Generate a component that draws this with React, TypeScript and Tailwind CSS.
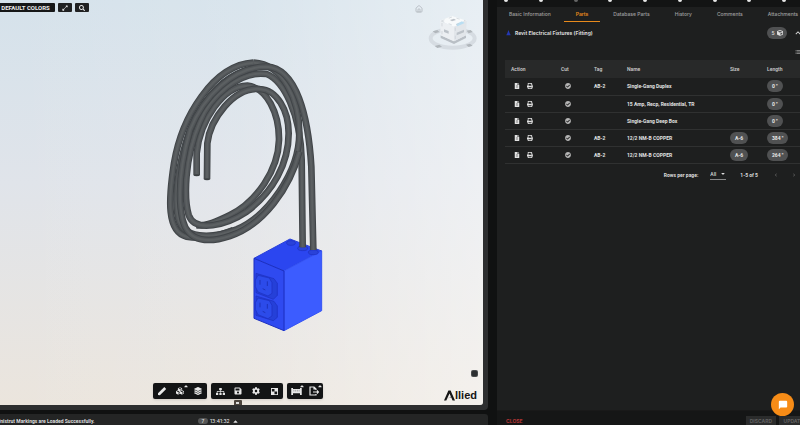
import React from 'react'
import {
  FaCubes, FaLayerGroup, FaSitemap, FaSave, FaCog, FaSearch,
  FaExpandAlt, FaCaretUp, FaFileAlt, FaPrint, FaCheckCircle, FaCube,
} from 'react-icons/fa'
import { MdChatBubble, MdFormatListBulleted, MdChevronLeft, MdChevronRight, MdExpandLess } from 'react-icons/md'
import { Home } from 'lucide-react'

const cables = [
  'M310 38 C190 45 95 200 72 340 C55 450 50 545 110 560 C150 568 200 560 250 540',
  'M140 376 L140 310 C150 210 220 108 292 107 C350 112 388 190 387 270 C385 360 320 455 240 495 C200 515 165 530 140 526',
  'M458 592 L455 330 C452 190 400 92 350 72 C270 60 180 140 150 215 C100 330 103 450 116 495 C135 550 230 525 290 485 C370 425 416 340 416 250 C416 180 380 120 330 117 C250 110 180 210 172 280 L171 388',
  'M310 38 C400 42 448 150 448 250 C448 370 350 500 260 538 C190 565 90 575 82 490 C70 400 105 250 150 180 C200 100 250 70 300 58',
  'M490 600 L484 350 C475 200 440 55 350 50 C250 50 160 140 120 240 C95 330 80 430 98 510 C115 580 180 578 240 558 C340 525 420 415 448 305',
]

function Scene() {
  return (
    <svg viewBox="0 0 483 405" preserveAspectRatio="none" className="absolute inset-0 h-full w-full" aria-label="Model view">
      <g transform="translate(230 220) scale(.33333)" stroke="#1c2fc0" strokeWidth="3" strokeLinejoin="round">
        <path d="M72 115 180 57 275 93 162 153Z" fill="#2b46f0" stroke="#2840d8" />
        <path d="M162 153 275 93V272L162 332Z" fill="#3c5cff" stroke="#3553f4" />
        <path d="M72 115 162 153V332L72 295Z" fill="#2f4af0" />
        <g fill="#2540d8" strokeWidth="2">
          <path d="M78 160 132 176 142 190V226L130 238 78 218Z" />
          <path d="M78 228 132 244 142 258V292L130 302 78 286Z" />
          <path d="M84 166 118 174 126 188V220L114 228 84 216 76 200V180Z" fill="#2c4bea" />
          <path d="M84 234 118 242 126 256V288L114 296 84 284 76 268V248Z" fill="#2c4bea" />
          <path d="M90 180V194M112 184V198M90 248V262M112 252V266M98 206l8 4M98 274l8 4" stroke="#1727a0" />
        </g>
        <g fill="#2a42d8" strokeWidth="2">
          <ellipse cx="183" cy="69" rx="13" ry="7" />
          <ellipse cx="218" cy="85" rx="15" ry="7" />
          <ellipse cx="250" cy="97" rx="15" ry="7" />
        </g>
      </g>
      <g transform="translate(150 50) scale(.33333)" fill="none">
        {cables.map((d) => (
          <g key={d}>
            <path d={d} stroke="#414548" strokeWidth="20" />
            <path d={d} stroke="#525659" strokeWidth="14" />
            <path d={d} stroke="#5c6062" strokeWidth="6" />
          </g>
        ))}
        <ellipse cx="140" cy="376" rx="9" ry="3" fill="#3b3f42" />
        <ellipse cx="171" cy="388" rx="9" ry="3" fill="#3b3f42" />
      </g>
      <g transform="translate(400 0) scale(.33333)">
        <ellipse cx="158" cy="115" rx="66" ry="28" fill="none" stroke="#d6dce2" strokeWidth="12" />
        <path d="M98 94l14-4 6 6-12 4zM104 138l14-4 8 6-14 4zM200 92l12-2 6 6-12 4zM198 134l12-3 8 6-12 4z" fill="#b0b6bb" />
        <path d="M122 106 162 124V132L122 114zM162 124 198 106V114L162 132z" fill="#b9bfc5" />
        <path d="M120 62 156 48 200 62 162 80Z" fill="#f8fafb" />
        <path d="M120 62 162 80V124L122 106Z" fill="#eceff2" />
        <path d="M162 80 200 62 198 106 162 124Z" fill="#e2e6ea" />
        <path d="M168 72l18-8 8 5-22 10z" fill="#b9def2" />
        <path d="M132 88l14 5v8l-14-5zM170 98l22-9v8l-22 9zM150 60l12-4 6 4-12 4z" fill="#bcc2c8" />
        <path d="M124 63 156 51 196 62 162 77ZM126 69V103M166 83V120" fill="none" stroke="#c8ced4" strokeDasharray="10 14" strokeWidth="2" />
      </g>
    </svg>
  )
}

function Tool({ label, up, children }: { label: string; up?: boolean; children: React.ReactNode }) {
  return (
    <button aria-label={label} className="relative flex h-4 w-[18px] items-center justify-center">
      {children}
      {up && <FaCaretUp className="absolute top-0 right-0 size-[6px]" />}
    </button>
  )
}

const group = 'flex items-center rounded-[2px] bg-[#131415] text-[#e8e8e8] shadow'

function Viewer() {
  return (
    <main className="min-h-0 flex-1 rounded-br-[4px] bg-[#2d2e2f] pr-[5px] pb-[5px]">
      <div className="relative flex h-full flex-col justify-between overflow-hidden rounded-br-[3px] bg-linear-to-b from-[#d5e2eb] via-[#e0e4ea] via-45% to-[#ebe5dd]">
        <div className="absolute inset-0 bg-linear-to-r from-white/0 via-white/10 to-white/45" />
        <Scene />
        <div className="relative flex items-center gap-[3px] pt-[3px] text-[#eeeeee]">
          <button className="h-[9px] w-[55px] rounded-r-[1px] bg-[#161718] pr-1 text-center font-[Roboto] text-[6px] leading-[9px] font-bold whitespace-nowrap">DEFAULT COLORS</button>
          <button aria-label="Expand" className="flex h-[9px] w-[14px] items-center justify-center rounded-[1px] bg-[#202122]"><FaExpandAlt className="size-[6px]" /></button>
          <button aria-label="Search" className="flex h-[9px] w-[14px] items-center justify-center rounded-[1px] bg-[#202122]"><FaSearch className="size-[6px]" /></button>
        </div>
        <button aria-label="Home view" className="absolute top-[5px] right-[60px] text-[#a5abb1]"><Home className="size-[8px]" /></button>
        <button aria-label="View options" className="absolute right-[6px] bottom-[29px] size-[5px] rounded-[1px] bg-[#2c2f31] ring-1 ring-[#484b4d]" />
        <div className="relative flex justify-center gap-1 pr-[7px] pb-[6px]">
          <div className={group}>
            <Tool label="Measure"><svg viewBox="0 0 10 10" className="size-[10px]"><path d="M1 7.3 7.3 1l1.9 1.9L2.9 9.2 1 9z" fill="currentColor" /></svg></Tool>
            <Tool label="Models" up><FaCubes className="size-2" /></Tool>
            <Tool label="Layers"><FaLayerGroup className="size-2" /></Tool>
          </div>
          <div className={group}>
            <Tool label="Model tree"><FaSitemap className="size-[9px]" /></Tool>
            <Tool label="Save view"><FaSave className="size-2" /></Tool>
            <Tool label="Settings"><FaCog className="size-2" /></Tool>
            <Tool label="Visibility"><svg viewBox="0 0 8 8" className="size-[7px]"><path d="M0 0h8v8H0z" fill="currentColor" /><path d="M1 1h3v3H1zM4 4h3v3H4z" fill="#131415" /></svg></Tool>
          </div>
          <div className={group}>
            <Tool label="Spool" up><svg viewBox="0 0 12 8" className="h-[7px] w-[11px]"><path d="M0 0h2v1h8V0h2v8h-2V6H2v2H0z" fill="currentColor" /><path d="M3 2v2M5 2v2M7 2v2M9 2v2" stroke="#555" strokeWidth=".5" /></svg></Tool>
            <Tool label="Export" up><svg viewBox="0 0 10 10" className="size-[10px]" fill="none" stroke="currentColor" strokeWidth="1.2"><path d="M7 4V3L5 1H1v8h6V8M5 1v2h2M4 6h5M8 4.5 9.5 6 8 7.5" /></svg></Tool>
          </div>
          <button aria-label="Toggle toolbar" className="absolute bottom-0 left-1/2 flex h-[5px] w-[8px] -translate-x-2 items-center justify-center rounded-t-[1px] bg-[#4c443d]"><span className="h-[2px] w-[3px] bg-[#dddddd]" /></button>
        </div>
        <div className="absolute right-[6px] bottom-[3px] flex items-end text-[#151515]">
          <svg viewBox="0 0 11 11" className="mb-px size-[11px]"><path d="M0 10.5 4.4.5h2.2l4.4 10H8.6L5.5 3.6 2.3 10.5zM3 9l5-3 1 1.5-3-.5z" fill="currentColor" /></svg>
          <span className="font-['Liberation_Sans'] text-[11px] leading-[13px] font-bold">llied</span>
        </div>
      </div>
    </main>
  )
}

const tabs = ['Basic Information', 'Parts', 'Database Parts', 'History', 'Comments', 'Attachments']
const rows = [
  ['AB-2', 'Single-Gang Duplex', '', '0 "'],
  ['', '15 Amp, Recp, Residential, TR', '', '0 "'],
  ['', 'Single-Gang Deep Box', '', '0 "'],
  ['AB-2', '12/2 NM-B COPPER', 'A-6', '384 "'],
  ['AB-2', '12/2 NM-B COPPER', 'A-6', '264 "'],
]

function Pill({ children }: { children: React.ReactNode }) {
  return <span className="inline-flex h-3 items-center rounded-full bg-[#505152] px-[5px] align-middle text-[#e8e8e8]">{children}</span>
}

function Parts() {
  return (
    <table className="w-full table-fixed text-left font-[Roboto,sans-serif] whitespace-nowrap">
      <colgroup>
        <col className="w-[56px]" /><col className="w-[33px]" /><col className="w-[33px]" /><col className="w-[103px]" /><col className="w-[37px]" /><col />
      </colgroup>
      <thead>
        <tr className="h-[18px] bg-[#282929] text-[#c8c8c8]">
          <th className="pl-[6px] font-semibold">Action</th>
          <th className="font-semibold">Cut</th>
          <th className="font-semibold">Tag</th>
          <th className="font-semibold">Name</th>
          <th className="font-semibold">Size</th>
          <th className="font-semibold">Length</th>
        </tr>
      </thead>
      <tbody>
        {rows.map(([tag, name, size, length], i) => (
          <tr key={i} className="h-[17px] border-b border-[#303131] font-bold text-[#e2e2e2]">
            <td>
              <span className="flex items-center gap-[7px] pl-[9px]">
                <button aria-label={`Details for ${name}`}><FaFileAlt className="size-[6px]" /></button>
                <button aria-label={`Print ${name}`}><FaPrint className="size-[6px]" /></button>
              </span>
            </td>
            <td><FaCheckCircle className="ml-1 size-[6px] text-[#b5b5b5]" /></td>
            <td>{tag}</td>
            <td>{name}</td>
            <td>{size && <Pill>{size}</Pill>}</td>
            <td><Pill>{length}</Pill></td>
          </tr>
        ))}
      </tbody>
    </table>
  )
}

export default function App() {
  return (
    <div className="flex h-screen gap-[9px] overflow-hidden bg-[#101111] font-[Inter,sans-serif] text-[5px] leading-[8px] text-[#dddddd]">
      <div className="flex min-w-0 flex-[488] flex-col gap-1">
        <Viewer />
        <footer className="relative h-[11px] overflow-hidden rounded-tr-[3px] bg-[#242525] whitespace-nowrap">
          <p className="-ml-[3px] pt-[3px] font-[Roboto,sans-serif] font-bold">Unistrut Markings are Loaded Successfully.</p>
          <div className="absolute top-[3px] left-[198px] flex items-center gap-[2px] font-medium">
            <span className="h-[6px] w-[10px] rounded-full bg-[#555656] text-center leading-[6px]">7</span>
            <time>13:41:32</time>
            <FaCaretUp className="size-[7px]" />
          </div>
        </footer>
      </div>
      <aside className="relative flex min-w-0 flex-[303] flex-col overflow-hidden bg-[#1e1f1f]">
        <div className="flex h-[7px] shrink-0 justify-between overflow-hidden bg-[#131414] pr-[14px] pl-[7px]">
          {Array.from({ length: 9 }, (_, i) => (
            <span key={i} className={i === 2 ? '-mt-[2px] size-1 rounded-full bg-[#666666]' : '-mt-[2px] size-1 rounded-full bg-[#e8e8e8]'} />
          ))}
        </div>
        <nav className="flex h-[15px] shrink-0 gap-px whitespace-nowrap">
          {tabs.map((t) => (
            <button key={t} className={t === 'Parts' ? 'border-b border-[#e88a1c] px-3 font-semibold text-[#e88a1c]' : 'border-b border-transparent px-3 font-medium text-[#a0a0a0]'}>{t}</button>
          ))}
        </nav>
        <section className="flex-1 pl-2">
          <div className="flex h-[22px] items-center pr-1">
            <svg viewBox="0 0 6 8" className="mr-1 ml-px h-[6px] w-[5px]"><path d="M3 0 4.5 4 6 7H0l1.5-3zM2 4h2" fill="#2438b4" /></svg>
            <h1 className="flex-1 font-bold">Revit Electrical Fixtures (Fitting)</h1>
            <span className="-mr-[7px] flex items-center gap-[6px]">
              <span className="flex h-3 w-5 items-center justify-center gap-[2px] rounded-full bg-[#505152] font-semibold">5<FaCube className="size-[6px]" /></span>
              <button aria-label="Collapse"><MdExpandLess className="size-[10px]" /></button>
            </span>
          </div>
          <div className="-mr-px flex h-4 items-center justify-end overflow-hidden">
            <button aria-label="Columns"><MdFormatListBulleted className="size-[6px]" /></button>
          </div>
          <Parts />
          <div className="flex h-[22px] items-center justify-end pr-[3px] font-[Roboto,sans-serif]">
            <label htmlFor="page-size" className="mr-3 font-bold">Rows per page:</label>
            <span className="relative mr-[14px] border-b border-[#888888]">
              <select id="page-size" className="block h-[10px] w-4 appearance-none bg-transparent font-medium"><option>All</option></select>
              <FaCaretUp className="pointer-events-none absolute top-[2px] right-0 size-[6px] rotate-180" />
            </span>
            <span className="mr-[15px] font-bold">1-5 of 5</span>
            <button aria-label="Previous page" className="mr-[12px] text-[#777777]"><MdChevronLeft className="size-[6px]" /></button>
            <button aria-label="Next page" className="text-[#777777]"><MdChevronRight className="size-[6px]" /></button>
          </div>
        </section>
        <footer className="flex h-[15px] shrink-0 items-end gap-[3px] overflow-hidden border-t border-[#191919] bg-[#151616] pl-[9px] leading-[11px] font-bold whitespace-nowrap">
          <button className="mr-auto h-[9px] text-[#b53535]">CLOSE</button>
          <button className="h-[9px] w-[30px] bg-[#2b2c2c] text-[#606060]">DISCARD</button>
          <button className="-mr-2 h-[9px] w-[29px] bg-[#2b2c2c] text-[#606060]">UPDATE</button>
        </footer>
        <button aria-label="Open chat" className="absolute right-[6px] bottom-[9px] flex size-[23px] items-center justify-center rounded-full bg-[#f78c17] text-white"><MdChatBubble className="size-[10px]" /></button>
      </aside>
    </div>
  )
}
